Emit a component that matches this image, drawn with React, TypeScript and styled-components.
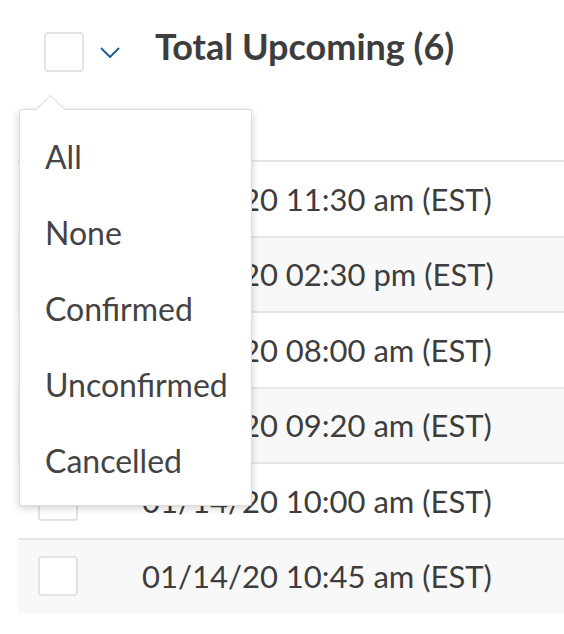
import React from "react";
import styled, { createGlobalStyle } from "styled-components";

const GlobalStyle = createGlobalStyle`
  html, body {
    margin: 0;
    padding: 0;
    background: #ffffff;
    font-family: Lato, "Open Sans", sans-serif;
    color: #3d3d3d;
  }
`;

const Page = styled.div`
  position: relative;
  width: 564px;
  height: 634px;
  overflow: hidden;
`;

const Header = styled.div`
  display: flex;
  align-items: center;
  height: 40px;
  margin-top: 32px;
  padding-left: 44px;
`;

const Checkbox = styled.span`
  display: block;
  flex: none;
  box-sizing: border-box;
  width: 40px;
  height: 40px;
  border: 2px solid #e3e3e3;
  border-radius: 4px;
  background: #ffffff;
`;

const Toggle = styled.button`
  display: flex;
  align-items: center;
  justify-content: center;
  width: 20px;
  height: 20px;
  margin-left: 16px;
  padding: 0;
  border: none;
  background: transparent;
  color: #1d5f9b;
`;

const Title = styled.h2`
  margin: 0 0 12px 35px;
  font-size: 36px;
  font-weight: 700;
  color: #3d3d3d;
  white-space: nowrap;
`;

const Table = styled.div`
  margin: 88px 0 0 18px;
  display: flex;
  flex-direction: column;
`;

const Row = styled.div<{ $shaded: boolean }>`
  display: flex;
  align-items: center;
  box-sizing: border-box;
  height: 75.5px;
  padding-left: 20px;
  border-top: 2px solid #e6e6e6;
  background: ${(p) => (p.$shaded ? "#f8f8f8" : "#ffffff")};
`;

const DateText = styled.span`
  margin-left: 64px;
  font-size: 31px;
  color: #3d3d3d;
  white-space: nowrap;
`;

const Menu = styled.ul`
  position: absolute;
  left: 19px;
  top: 109px;
  box-sizing: border-box;
  width: 233px;
  height: 397px;
  margin: 0;
  padding: 8px 0 7px;
  list-style: none;
  background: #ffffff;
  border: 1px solid #dcdcdc;
  border-radius: 3px;
  box-shadow: 0 2px 8px rgba(0, 0, 0, 0.18);

  &::before {
    content: "";
    position: absolute;
    left: 20px;
    top: -11px;
    width: 20px;
    height: 20px;
    background: #ffffff;
    border-top: 1px solid #dcdcdc;
    border-left: 1px solid #dcdcdc;
    transform: rotate(45deg);
  }
`;

const MenuItem = styled.li`
  display: flex;
  align-items: center;
  height: 76px;
  padding-left: 25px;
  font-size: 32px;
  color: #444444;
`;

const Chevron = () => (
  <svg width="20" height="11" viewBox="0 0 20 11" fill="none">
    <path d="M1 1L10 10L19 1" stroke="currentColor" strokeWidth="2" />
  </svg>
);

const dates = [
  "01/14/20 11:30 am (EST)",
  "01/14/20 02:30 pm (EST)",
  "01/14/20 08:00 am (EST)",
  "01/14/20 09:20 am (EST)",
  "01/14/20 10:00 am (EST)",
  "01/14/20 10:45 am (EST)",
];

const options = ["All", "None", "Confirmed", "Unconfirmed", "Cancelled"];

export default function App() {
  return (
    <Page>
      <GlobalStyle />
      <Header>
        <Checkbox />
        <Toggle aria-label="Select">
          <Chevron />
        </Toggle>
        <Title>Total Upcoming (6)</Title>
      </Header>
      <Table>
        {dates.map((d, i) => (
          <Row key={d} $shaded={i % 2 === 1}>
            <Checkbox />
            <DateText>{d}</DateText>
          </Row>
        ))}
      </Table>
      <Menu>
        {options.map((o) => (
          <MenuItem key={o}>{o}</MenuItem>
        ))}
      </Menu>
    </Page>
  );
}
